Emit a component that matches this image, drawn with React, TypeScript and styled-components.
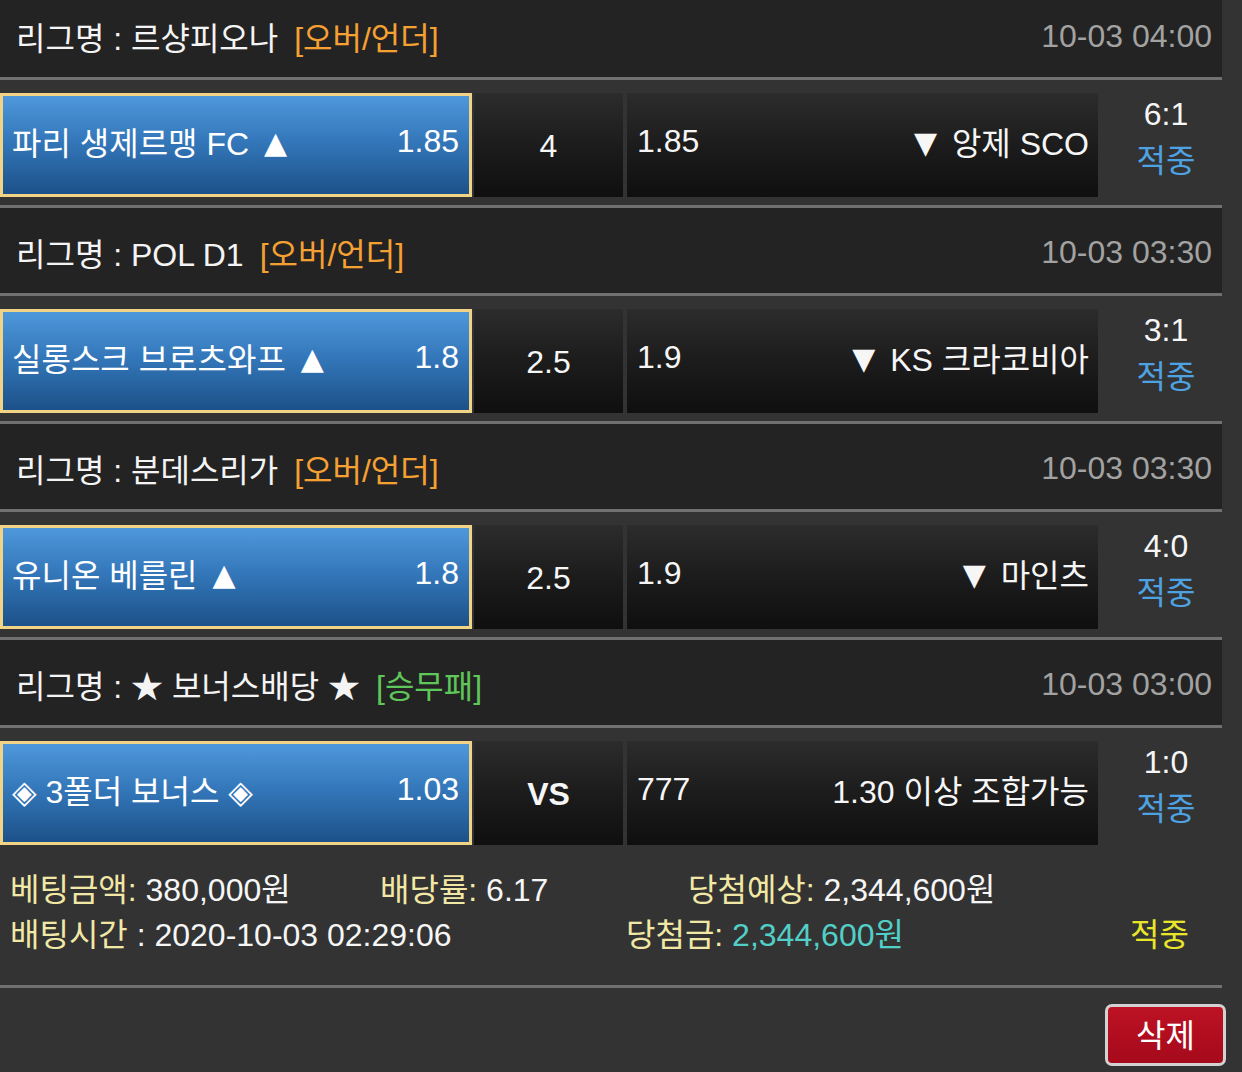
import * as React from "react";
import styled, { createGlobalStyle } from "styled-components";

interface IBet {
  league: string;
  type: string;
  typeColor: "orange" | "green";
  time: string;
  home: React.ReactNode;
  homeOdds: string;
  handicap: string;
  handicapBold?: boolean;
  awayOdds: string;
  away: React.ReactNode;
  score: string;
}

const Arrow = styled.span<{ $side: "left" | "right" }>`
  font-family: "DejaVu Sans", sans-serif;
  font-size: 30px;
  position: relative;
  top: -2px;
  margin: ${p => (p.$side === "right" ? "0 0 0 6px" : "0 6px 0 0")};
`;

const bets: IBet[] = [
  {
    league: "르샹피오나",
    type: "[오버/언더]",
    typeColor: "orange",
    time: "10-03 04:00",
    home: (
      <>
        파리 생제르맹 FC <Arrow $side="right">▲</Arrow>
      </>
    ),
    homeOdds: "1.85",
    handicap: "4",
    awayOdds: "1.85",
    away: (
      <>
        <Arrow $side="left">▼</Arrow> 앙제 SCO
      </>
    ),
    score: "6:1"
  },
  {
    league: "POL D1",
    type: "[오버/언더]",
    typeColor: "orange",
    time: "10-03 03:30",
    home: (
      <>
        실롱스크 브로츠와프 <Arrow $side="right">▲</Arrow>
      </>
    ),
    homeOdds: "1.8",
    handicap: "2.5",
    awayOdds: "1.9",
    away: (
      <>
        <Arrow $side="left">▼</Arrow> KS 크라코비아
      </>
    ),
    score: "3:1"
  },
  {
    league: "분데스리가",
    type: "[오버/언더]",
    typeColor: "orange",
    time: "10-03 03:30",
    home: (
      <>
        유니온 베를린 <Arrow $side="right">▲</Arrow>
      </>
    ),
    homeOdds: "1.8",
    handicap: "2.5",
    awayOdds: "1.9",
    away: (
      <>
        <Arrow $side="left">▼</Arrow> 마인츠
      </>
    ),
    score: "4:0"
  },
  {
    league: "★ 보너스배당 ★",
    type: "[승무패]",
    typeColor: "green",
    time: "10-03 03:00",
    home: "◈ 3폴더 보너스 ◈",
    homeOdds: "1.03",
    handicap: "VS",
    handicapBold: true,
    awayOdds: "777",
    away: "1.30 이상 조합가능",
    score: "1:0"
  }
];

const typeColors = {
  orange: "#f5a033",
  green: "#5fc65a"
};

const GlobalStyle = createGlobalStyle`
  html, body {
    margin: 0;
    padding: 0;
    background: #333333;
    overflow: hidden;
  }
  body {
    font-family: "Liberation Sans", "Noto Sans CJK KR", "DejaVu Sans", sans-serif;
    color: #f2f2f2;
  }
`;

const Page = styled.div`
  width: 1242px;
  height: 1072px;
  background: #333333;
  overflow: hidden;
`;

const BetList = styled.div`
  width: 1222px;
  margin-top: -8px;
`;

const LeagueHeader = styled.div`
  height: 88px;
  display: flex;
  align-items: center;
  justify-content: space-between;
  padding: 3px 10px 0 16px;
  box-sizing: border-box;
  background: #232323;
  border-bottom: 3px solid #707070;
  font-size: 32px;
  white-space: nowrap;
`;

const LeagueName = styled.div`
  display: flex;
  align-items: center;
  gap: 16px;
  color: #f4f4f4;
`;

const BetType = styled.span<{ $color: string }>`
  color: ${p => p.$color};
`;

const MatchTime = styled.span`
  color: #a2a2a2;
`;

const MatchRow = styled.div<{ $last?: boolean }>`
  display: flex;
  padding: 13px 0 ${p => (p.$last ? "9px" : "8px")};
  border-bottom: ${p => (p.$last ? "none" : "3px solid #707070")};
  height: 104px;
  font-size: 32px;
`;

const HomeCell = styled.div`
  width: 472px;
  box-sizing: border-box;
  border: 3px solid #f0d384;
  background: linear-gradient(#4e98da 0%, #3478bb 45%, #1c5189 100%);
  display: flex;
  align-items: center;
  justify-content: space-between;
  padding: 0 10px 8px 9px;
  color: #ffffff;
  white-space: nowrap;
`;

const DarkCell = styled.div`
  background: linear-gradient(#2c2c2c 0%, #1c1c1c 50%, #0f0f0f 100%);
  display: flex;
  align-items: center;
  box-sizing: border-box;
  color: #f6f6f6;
  white-space: nowrap;
`;

const HandicapCell = styled(DarkCell)<{ $bold?: boolean }>`
  width: 149px;
  margin-left: 2px;
  justify-content: center;
  padding-top: 2px;
  font-weight: ${p => (p.$bold ? 700 : 400)};
`;

const AwayCell = styled(DarkCell)`
  width: 471px;
  margin-left: 4px;
  justify-content: space-between;
  padding: 0 9px 8px 10px;
`;

const ResultCell = styled.div`
  flex: 1;
  display: flex;
  flex-direction: column;
  align-items: center;
  justify-content: center;
  padding: 0 0 15px 12px;
  line-height: 47px;
`;

const Score = styled.span`
  color: #f6f6f6;
`;

const Hit = styled.span`
  color: #4fa2e2;
`;

const Summary = styled.div`
  width: 1222px;
  box-sizing: border-box;
  padding: 14px 0 27px 10px;
  border-bottom: 3px solid #707070;
  font-size: 32px;
  line-height: 45px;
`;

const SummaryLine = styled.div`
  display: flex;
  white-space: nowrap;
`;

const SummaryItem = styled.span<{ $width?: number }>`
  width: ${p => (p.$width ? `${p.$width}px` : "auto")};
  flex-shrink: 0;
`;

const Label = styled.span`
  color: #f2e8a6;
`;

const Value = styled.span<{ $tone?: "cyan" }>`
  color: ${p => (p.$tone === "cyan" ? "#52cfc6" : "#f6f6f6")};
`;

const HitYellow = styled.span`
  color: #e9e62a;
`;

const Actions = styled.div`
  display: flex;
  justify-content: flex-end;
  padding: 16px 16px 0 0;
`;

const DeleteButton = styled.button`
  width: 121px;
  height: 62px;
  box-sizing: border-box;
  border: 3px solid #d2d2d2;
  border-radius: 7px;
  background: linear-gradient(#bd1224, #a50a1b);
  color: #ffffff;
  font-family: "Liberation Sans", "Noto Sans CJK KR", sans-serif;
  font-size: 32px;
  padding: 0 0 4px;
  cursor: pointer;
`;

const BetBlock = ({ bet, last }: { bet: IBet; last: boolean }) => (
  <>
    <LeagueHeader>
      <LeagueName>
        <span>리그명 : {bet.league}</span>
        <BetType $color={typeColors[bet.typeColor]}>{bet.type}</BetType>
      </LeagueName>
      <MatchTime>{bet.time}</MatchTime>
    </LeagueHeader>
    <MatchRow $last={last}>
      <HomeCell>
        <span>{bet.home}</span>
        <span>{bet.homeOdds}</span>
      </HomeCell>
      <HandicapCell $bold={bet.handicapBold}>{bet.handicap}</HandicapCell>
      <AwayCell>
        <span>{bet.awayOdds}</span>
        <span>{bet.away}</span>
      </AwayCell>
      <ResultCell>
        <Score>{bet.score}</Score>
        <Hit>적중</Hit>
      </ResultCell>
    </MatchRow>
  </>
);

export default function App() {
  return (
    <Page>
      <GlobalStyle />
      <BetList>
        {bets.map((bet, i) => (
          <BetBlock key={i} bet={bet} last={i === bets.length - 1} />
        ))}
      </BetList>
      <Summary>
        <SummaryLine>
          <SummaryItem $width={370}>
            <Label>베팅금액:</Label> <Value>380,000원</Value>
          </SummaryItem>
          <SummaryItem $width={308}>
            <Label>배당률:</Label> <Value>6.17</Value>
          </SummaryItem>
          <SummaryItem>
            <Label>당첨예상:</Label> <Value>2,344,600원</Value>
          </SummaryItem>
        </SummaryLine>
        <SummaryLine>
          <SummaryItem $width={616}>
            <Label>배팅시간</Label> <Value>: 2020-10-03 02:29:06</Value>
          </SummaryItem>
          <SummaryItem $width={504}>
            <Label>당첨금:</Label> <Value $tone="cyan">2,344,600원</Value>
          </SummaryItem>
          <SummaryItem>
            <HitYellow>적중</HitYellow>
          </SummaryItem>
        </SummaryLine>
      </Summary>
      <Actions>
        <DeleteButton>삭제</DeleteButton>
      </Actions>
    </Page>
  );
}
